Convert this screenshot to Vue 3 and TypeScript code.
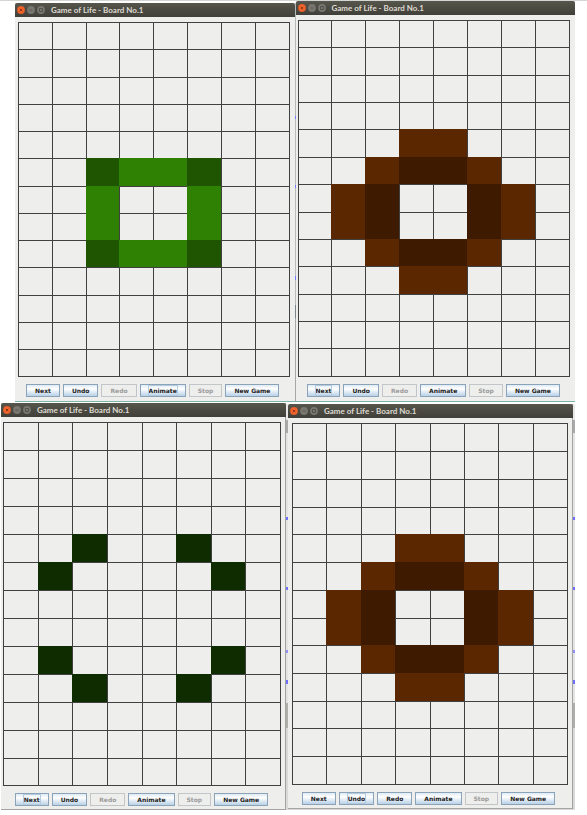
<script setup lang="ts">
interface Action {
  label: string
  enabled: boolean
}

interface BoardWindow {
  id: string
  rows: string[]
  focused: string
  actions: Action[]
}

const COLUMNS = 8

// One letter per cell: "." is empty, the others name a cell age.
const square: string[] = [
  '........', '........', '........', '........', '........',
  '..hggh..',
  '..g..g..',
  '..g..g..',
  '..hggh..',
  '........', '........', '........', '........',
]

const ring: string[] = [
  '........', '........', '........', '........',
  '...bb...',
  '..bddb..',
  '.bd..db.',
  '.bd..db.',
  '..bddb..',
  '...bb...',
  '........', '........', '........',
]

const corners: string[] = [
  '........', '........', '........', '........',
  '..n..n..',
  '.n....n.',
  '........',
  '........',
  '.n....n.',
  '..n..n..',
  '........', '........', '........',
]

const ageClass: Record<string, string> = {
  '.': '',
  g: 'live green',
  h: 'live deep-green',
  b: 'live brown',
  d: 'live deep-brown',
  n: 'live night',
}

function actions(canRedo: boolean): Action[] {
  return [
    { label: 'Next', enabled: true },
    { label: 'Undo', enabled: true },
    { label: 'Redo', enabled: canRedo },
    { label: 'Animate', enabled: true },
    { label: 'Stop', enabled: false },
    { label: 'New Game', enabled: true },
  ]
}

const desktops: { id: string; windows: BoardWindow[] }[] = [
  {
    id: 'upper',
    windows: [
      { id: 'one', rows: square, focused: 'Animate', actions: actions(false) },
      { id: 'two', rows: ring, focused: 'Next', actions: actions(false) },
    ],
  },
  {
    id: 'lower',
    windows: [
      { id: 'three', rows: corners, focused: 'Next', actions: actions(false) },
      { id: 'four', rows: ring, focused: 'Undo', actions: actions(true) },
    ],
  },
]

function cells(rows: string[]): string[] {
  return rows.join('').split('').slice(0, rows.length * COLUMNS)
}
</script>

<template>
  <main class="page">
    <div v-for="desktop in desktops" :key="desktop.id" class="desktop" :class="desktop.id">
      <section v-for="win in desktop.windows" :key="win.id" class="window" :class="win.id">
        <header class="titlebar">
          <button type="button" class="control" aria-label="Close">
            <svg viewBox="0 0 8 8" class="glyph">
              <circle cx="4" cy="4" r="3.9" fill="#f0642e" stroke="#a8441c" stroke-width=".2" />
              <path d="M2.8 2.8l2.4 2.4M5.2 2.8L2.8 5.2" stroke="#8a3210" stroke-width=".9" />
            </svg>
          </button>
          <button type="button" class="control" aria-label="Minimize">
            <svg viewBox="0 0 8 8" class="glyph">
              <circle cx="4" cy="4" r="3.9" fill="#77766f" />
              <path d="M2.5 4h3" stroke="#55544d" stroke-width=".8" />
            </svg>
          </button>
          <button type="button" class="control" aria-label="Maximize">
            <svg viewBox="0 0 8 8" class="glyph">
              <circle cx="4" cy="4" r="3.9" fill="#77766f" />
              <rect x="2.6" y="2.6" width="2.8" height="2.8" fill="none" stroke="#4a4943" stroke-width=".8" />
            </svg>
          </button>
          <h2 class="title">Game of Life - Board No.1</h2>
        </header>
        <div class="board">
          <span v-for="(cell, i) in cells(win.rows)" :key="i" class="cell" :class="ageClass[cell]"></span>
        </div>
        <footer class="actions">
          <button
            v-for="action in win.actions"
            :key="action.label"
            type="button"
            class="action"
            :class="{ focused: action.label === win.focused }"
            :disabled="!action.enabled"
          >
            <span class="label">{{ action.label }}</span>
          </button>
        </footer>
      </section>
    </div>
  </main>
</template>

<style>
body {
  background: #fff;
}
</style>

<style scoped>
.page {
  border-top: 1px solid #d4d6d4;
  padding: 0 12px 0 1px;
  font-family: "DejaVu Sans", sans-serif;
}

.desktop {
  display: flex;
  align-items: flex-start;
}

.upper {
  gap: 1px;
  margin-left: 14px;
  border-bottom: 1px solid #7db3a8;
  background: linear-gradient(
    #fff 2px, #b5b8b8 2px 115px, #7a7aff 115px 118px, #b9bcbc 118px 184px, #7a7aff 184px 187px,
    #b9bcbc 187px 275px, #7a7aff 275px 279px, #b9bcbc 279px 304px, #7d858c 304px 317px, #a5a8a8 317px
  );
}

.lower {
  gap: 2px;
  margin-top: 1px;
  padding-right: 2px;
  background: linear-gradient(
    #fff 1px, #e8e8e8 1px 17px, #a9a9a9 17px 30px, #e3e3e3 30px 114px, #6f6fff 114px 117px,
    #e3e3e3 117px 184px, #6f6fff 184px 187px, #e3e3e3 187px 247px, #8f8fff 247px 250px,
    #e3e3e3 250px 277px, #6f6fff 277px 281px, #e3e3e3 281px 300px, #b0aeaa 300px 325px, #d9d9d9 325px
  );
}

.window {
  flex: 1;
  min-width: 0;
  background: #eeeeed;
}

.one { --left: 3px; margin-top: 2px; }
.two { --left: 2px; }
.three { --left: 2px; }
.four { --left: 4px; margin-top: 1px; }

.lower .window {
  box-shadow: inset -1px -1px #a3a3a1;
}

.titlebar {
  display: flex;
  align-items: center;
  gap: 2px;
  height: 14px;
  padding: 0 2px;
  border-radius: 2px 2px 0 0;
  background: linear-gradient(#57564c, #403f39);
}

.control {
  width: 8px;
  height: 8px;
  padding: 0;
  border: 0;
  background: none;
}

.glyph {
  display: block;
  width: 100%;
  height: 100%;
}

.title {
  margin: 0 0 0 4px;
  color: #dfdbd2;
  font-family: Lato, sans-serif;
  font-size: 8px;
  font-weight: 700;
  line-height: 14px;
  white-space: nowrap;
}

.board {
  display: grid;
  grid-template-columns: repeat(8, 1fr);
  grid-template-rows: repeat(13, 1fr);
  aspect-ratio: 320 / 419;
  box-sizing: border-box;
  margin: 5px 5px 0 var(--left);
  border: solid #404040;
  border-width: 0 1px 1px 0;
}

.cell {
  border: solid #404040;
  border-width: 1px 0 0 1px;
}

.live { border-color: transparent; }
.green { background-color: #2f8103; }
.deep-green { background-color: #1f5500; }
.brown { background-color: #5b2700; }
.deep-brown { background-color: #3e1a00; }
.night { background-color: #0f2b00; }

.actions {
  display: flex;
  justify-content: center;
  gap: 3px;
  padding: 7px 4px 4px 0;
}

.action {
  height: 13px;
  padding: 0 8px;
  border: 1px solid #8ba3b8;
  background: linear-gradient(#dfeaf4, #fff 35%, #b9d1e6);
  color: #222;
  font-family: inherit;
  font-size: 6px;
  font-weight: 700;
  line-height: 9px;
  white-space: nowrap;
}

.action:disabled {
  border-color: #c3c6c8;
  background: #eeeeed;
  color: #9c9c9c;
}

.label {
  display: block;
}

.focused .label {
  outline: 1px solid #b5cbe0;
}
</style>
